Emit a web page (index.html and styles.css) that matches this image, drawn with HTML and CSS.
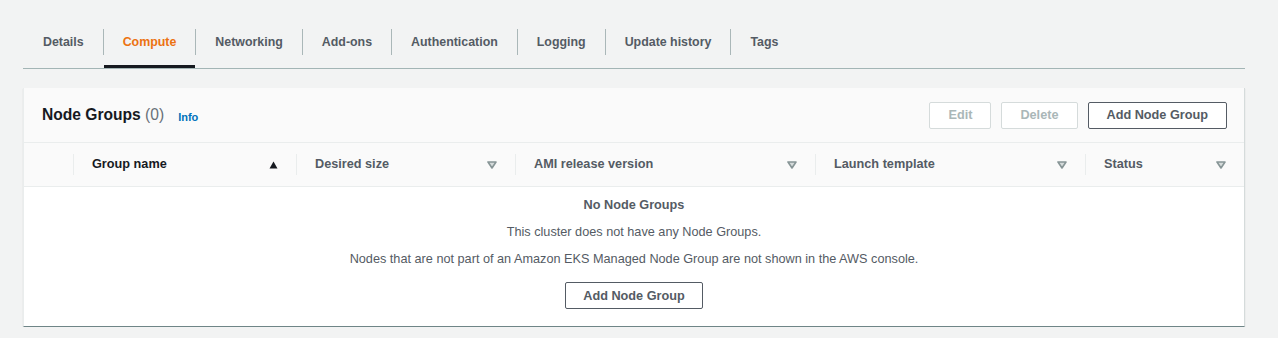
FILE: index.html
```html
<!DOCTYPE html>
<html lang="en">
<head>
  <meta charset="UTF-8">
  <title>Cluster - Compute</title>
  <link rel="stylesheet" href="styles.css">
</head>
<body>
  <div class="page">
    <ul class="tabs">
      <li class="tab first"><span class="sep"></span><a href="#">Details</a></li>
      <li class="tab active"><span class="sep"></span><a href="#">Compute</a></li>
      <li class="tab"><span class="sep"></span><a href="#">Networking</a></li>
      <li class="tab"><span class="sep"></span><a href="#">Add-ons</a></li>
      <li class="tab"><span class="sep"></span><a href="#">Authentication</a></li>
      <li class="tab"><span class="sep"></span><a href="#">Logging</a></li>
      <li class="tab"><span class="sep"></span><a href="#">Update history</a></li>
      <li class="tab"><span class="sep"></span><a href="#">Tags</a></li>
    </ul>

    <div class="card">
      <div class="card-header">
        <h2>Node Groups <span class="count">(0)</span></h2>
        <a class="info" href="#">Info</a>
        <div class="actions">
          <button class="btn" disabled>Edit</button>
          <button class="btn" disabled>Delete</button>
          <button class="btn">Add Node Group</button>
        </div>
      </div>

      <div class="table-head">
        <div class="col-select"></div>
        <div class="col sorted">
          <span>Group name</span>
          <svg width="9" height="8" viewBox="0 0 9 8"><polygon points="4.5,0.5 8.5,7.5 0.5,7.5" fill="#16191f"/></svg>
        </div>
        <div class="col">
          <span>Desired size</span>
          <svg class="caret" width="10" height="8" viewBox="0 0 10 8"><polygon points="1,1 9,1 5,7" fill="#d5dbdb" stroke="#879596" stroke-width="1.6" stroke-linejoin="round"/></svg>
        </div>
        <div class="col">
          <span>AMI release version</span>
          <svg class="caret" width="10" height="8" viewBox="0 0 10 8"><polygon points="1,1 9,1 5,7" fill="#d5dbdb" stroke="#879596" stroke-width="1.6" stroke-linejoin="round"/></svg>
        </div>
        <div class="col">
          <span>Launch template</span>
          <svg class="caret" width="10" height="8" viewBox="0 0 10 8"><polygon points="1,1 9,1 5,7" fill="#d5dbdb" stroke="#879596" stroke-width="1.6" stroke-linejoin="round"/></svg>
        </div>
        <div class="col">
          <span>Status</span>
          <svg class="caret" width="10" height="8" viewBox="0 0 10 8"><polygon points="1,1 9,1 5,7" fill="#d5dbdb" stroke="#879596" stroke-width="1.6" stroke-linejoin="round"/></svg>
        </div>
      </div>

      <div class="empty">
        <p class="empty-title">No Node Groups</p>
        <p>This cluster does not have any Node Groups.</p>
        <p>Nodes that are not part of an Amazon EKS Managed Node Group are not shown in the AWS console.</p>
        <button class="btn">Add Node Group</button>
      </div>
    </div>
  </div>
</body>
</html>
```

FILE: styles.css
```css
* {
  margin: 0;
  padding: 0;
  box-sizing: border-box;
}

body {
  font-family: 'Liberation Sans', Arial, sans-serif;
  font-size: 12.7px;
  background: #f2f3f3;
  color: #545b64;
}

.page {
  padding: 21px 33px 0 23px;
}

/* Tabs */
.tabs {
  list-style: none;
  display: flex;
  border-bottom: 1px solid #a3b5b5;
}

.tab {
  display: flex;
  align-items: flex-start;
}

.tab .sep {
  width: 1px;
  height: 26px;
  margin-top: 8px;
  background: #aab7b8;
}

.tab.first .sep {
  background: transparent;
}

.tab a {
  display: block;
  height: 47px;
  padding: 12px 19px 0;
  line-height: 18px;
  font-size: 12.4px;
  font-weight: 700;
  color: #545b64;
  text-decoration: none;
}

.tab.active a {
  color: #ec7211;
  border-bottom: 3px solid #16191f;
}

/* Card */
.card {
  margin-top: 19px;
  background: #fff;
  border-left: 1px solid #eaeded;
  border-right: 1px solid #d5dbdb;
  border-bottom: 1px solid #6f8587;
  box-shadow: 0 1px 1px 0 rgba(0, 28, 36, 0.15);
}

.card-header {
  display: flex;
  align-items: center;
  height: 55px;
  padding: 0 17px 0 18px;
  background: #fafafa;
  border-bottom: 1px solid #eaeded;
}

.card-header h2 {
  font-size: 15.6px;
  font-weight: 700;
  color: #16191f;
}

.card-header .count {
  font-weight: 400;
  color: #687078;
}

.info {
  margin-left: 14px;
  margin-top: 3px;
  font-size: 11px;
  font-weight: 700;
  color: #0073bb;
  text-decoration: none;
}

.actions {
  margin-left: auto;
  display: flex;
  gap: 10px;
}

.btn {
  height: 27px;
  padding: 0 18px;
  font-family: inherit;
  font-size: 12.7px;
  font-weight: 700;
  color: #545b64;
  background: #fff;
  border: 1px solid #545b64;
  border-radius: 2px;
}

.btn:disabled {
  color: #aab7b8;
  border-color: #d5dbdb;
}

/* Table header */
.table-head {
  display: grid;
  grid-template-columns: 49px 223px 219px 300px 270px 1fr;
  align-items: center;
  height: 44px;
  background: #fafafa;
  border-bottom: 1px solid #eaeded;
}

.table-head .col {
  display: flex;
  align-items: center;
  justify-content: space-between;
  height: 21px;
  padding: 0 18px;
  border-left: 1px solid #eaeded;
  font-weight: 700;
  color: #545b64;
}

.table-head .col span {
  margin-top: -2px;
}

.table-head .col.sorted {
  color: #16191f;
}

/* Empty state */
.empty {
  text-align: center;
  padding: 9px 20px 17px;
  line-height: 18px;
}

.empty p {
  margin-bottom: 9px;
}

.empty .empty-title {
  font-weight: 700;
}

.empty .btn {
  margin-top: 5px;
  padding: 0 17px;
}
```
